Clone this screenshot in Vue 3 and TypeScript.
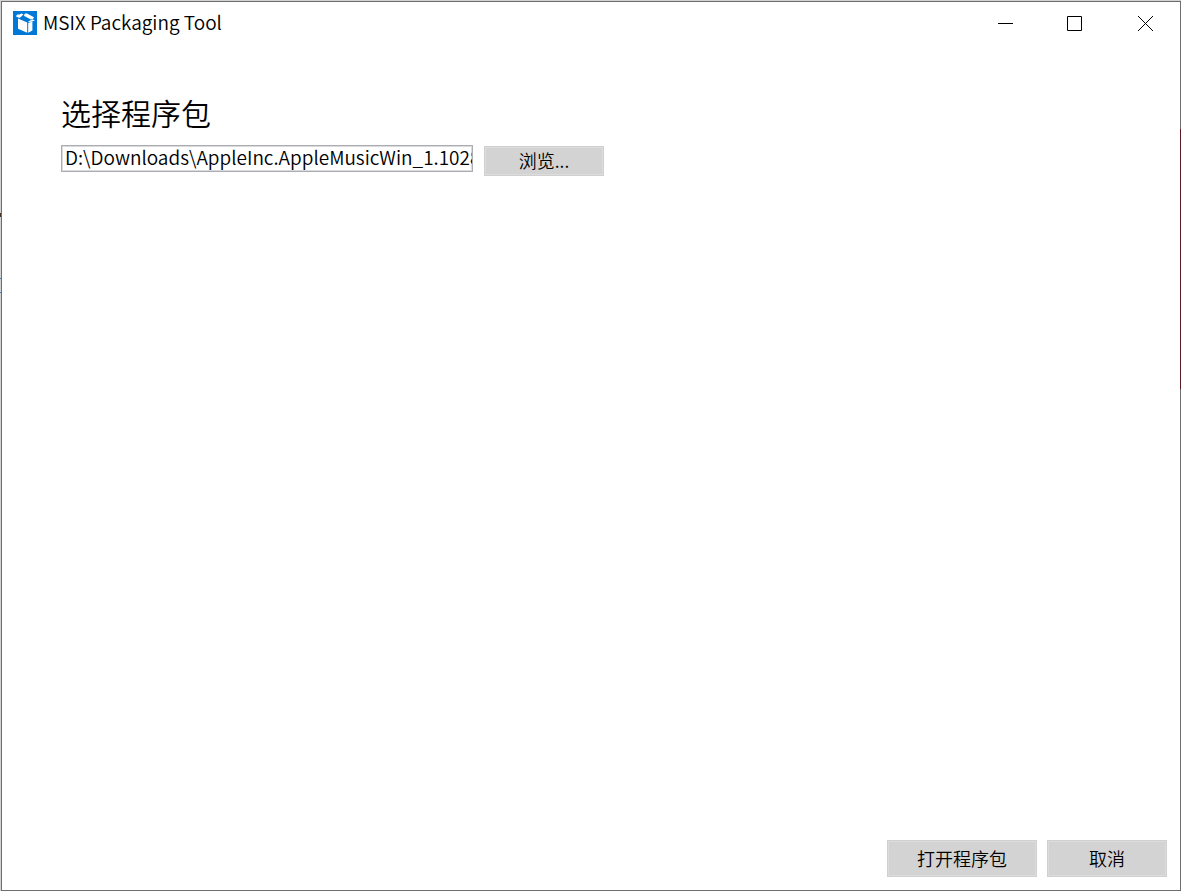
<script setup lang="ts">
import { ref } from 'vue'

const packagePath = ref<string>('D:\\Downloads\\AppleInc.AppleMusicWin_1.1028')
</script>

<template>
  <div class="desktop">
    <span class="behind-left dark" aria-hidden="true"></span>
    <span class="behind-left blue" aria-hidden="true"></span>
    <div class="window">
      <span class="behind-right" aria-hidden="true"></span>
      <header class="titlebar">
        <svg class="logo" viewBox="0 0 24 24" aria-hidden="true">
          <rect width="24" height="24" fill="#0078d7" />
          <path fill="#fff" d="M5 7.6 14.2 11.6v10.2L5 17.8z" />
          <path fill="#fff" d="M15.2 12 19.4 10.6v9L15.2 21.8z" />
          <path fill="#fff" d="M2.8 5.2 4.4 3.4 6.4 3.6 8.2 2.6 10.4 3.2 9 5 6.4 7z" />
          <path fill="#fff" d="M12 2.4 14 2.6 21 6.2 19.8 8.2 17.8 8.4 10.8 4.8z" />
          <path fill="#fff" d="M15 10.6 19.6 8.4 21.8 9.2 20.6 10 16.4 11.2z" />
        </svg>
        <h1 class="title">MSIX Packaging Tool</h1>
        <div class="controls">
          <button type="button" class="control" aria-label="Minimize">
            <svg viewBox="0 0 15 15" aria-hidden="true"><path d="M0 7.5h15" /></svg>
          </button>
          <button type="button" class="control maximize" aria-label="Maximize">
            <svg viewBox="0 0 15 15" aria-hidden="true"><path d="M.5.5h14v14H.5z" /></svg>
          </button>
          <button type="button" class="control" aria-label="Close">
            <svg viewBox="0 0 15 15" aria-hidden="true"><path d="M0 0l15 15M15 0L0 15" /></svg>
          </button>
        </div>
      </header>
      <main class="content">
        <label class="heading" for="package-path">选择程序包</label>
        <div class="picker">
          <input id="package-path" v-model="packagePath" class="path" type="text" spellcheck="false" />
          <button type="button" class="button browse">浏览...</button>
        </div>
      </main>
      <footer class="actions">
        <button type="button" class="button open">打开程序包</button>
        <button type="button" class="button cancel">取消</button>
      </footer>
    </div>
  </div>
</template>

<style>
body {
  margin: 0;
}
</style>

<style scoped>
.desktop,
.desktop * {
  box-sizing: border-box;
}
.desktop {
  position: relative;
  display: flex;
  min-height: 100vh;
  padding: 1px 0 0 1px;
  background: #d2d2d2;
  color: #000;
  font-family: "Noto Sans CJK SC", sans-serif;
  font-size: 19px;
  font-weight: 350;
}
.window {
  position: relative;
  display: flex;
  flex: 1;
  flex-direction: column;
  border: 1px solid #6e6e6e;
  background: #fff;
}
.behind-left {
  position: absolute;
  left: 0;
  width: 1px;
}
.dark {
  top: 213px;
  height: 4px;
  background: #4a3020;
}
.blue {
  top: 278px;
  height: 15px;
  border: 1px solid #3c82c0;
  border-width: 1px 0;
}
.behind-right {
  position: absolute;
  top: 127px;
  right: -1px;
  width: 1px;
  height: 260px;
  background: #5c1a22;
}
.titlebar {
  display: flex;
  align-items: center;
  height: 42px;
  padding-left: 11px;
}
.logo {
  width: 24px;
  height: 24px;
}
.title {
  margin: 0 0 0 6px;
  padding-bottom: 2px;
  font-size: 19px;
  font-weight: 350;
  line-height: 24px;
}
.controls {
  display: flex;
  margin-left: auto;
}
.control {
  display: flex;
  align-items: center;
  justify-content: center;
  width: 70px;
  height: 42px;
  padding: 0;
  border: 0;
  background: none;
}
.maximize {
  padding-right: 2px;
}
.control svg {
  width: 15px;
  height: 15px;
  fill: none;
  stroke: #000;
}
.content {
  flex: 1;
  padding: 46px 59px 0;
}
.heading {
  display: block;
  margin-bottom: 11px;
  font-size: 30px;
  font-weight: 350;
  line-height: 44px;
}
.picker {
  display: flex;
  align-items: flex-start;
  gap: 11px;
}
.path {
  width: 412px;
  height: 27px;
  padding: 0 0 5px 3px;
  border: 1px solid #abadb3;
  box-shadow: inset 0 0 0 1px #d9dade;
  background: #fff;
  color: #000;
  font: inherit;
  outline: 0;
}
.button {
  border: 1px solid #d0d0d0;
  padding: 0 0 2px;
  background: #d3d3d3;
  box-shadow: inset 0 0 0 1px #dcdcdc;
  color: #000;
  font-family: "Noto Sans CJK SC", sans-serif;
  font-size: 18px;
  font-weight: 350;
}
.browse {
  width: 120px;
  height: 30px;
  margin-top: 1px;
  line-height: 24px;
}
.actions {
  display: flex;
  justify-content: flex-end;
  gap: 10px;
  padding: 0 13px 13px;
}
.open,
.cancel {
  height: 37px;
}
.open {
  width: 150px;
}
.cancel {
  width: 120px;
}
</style>
